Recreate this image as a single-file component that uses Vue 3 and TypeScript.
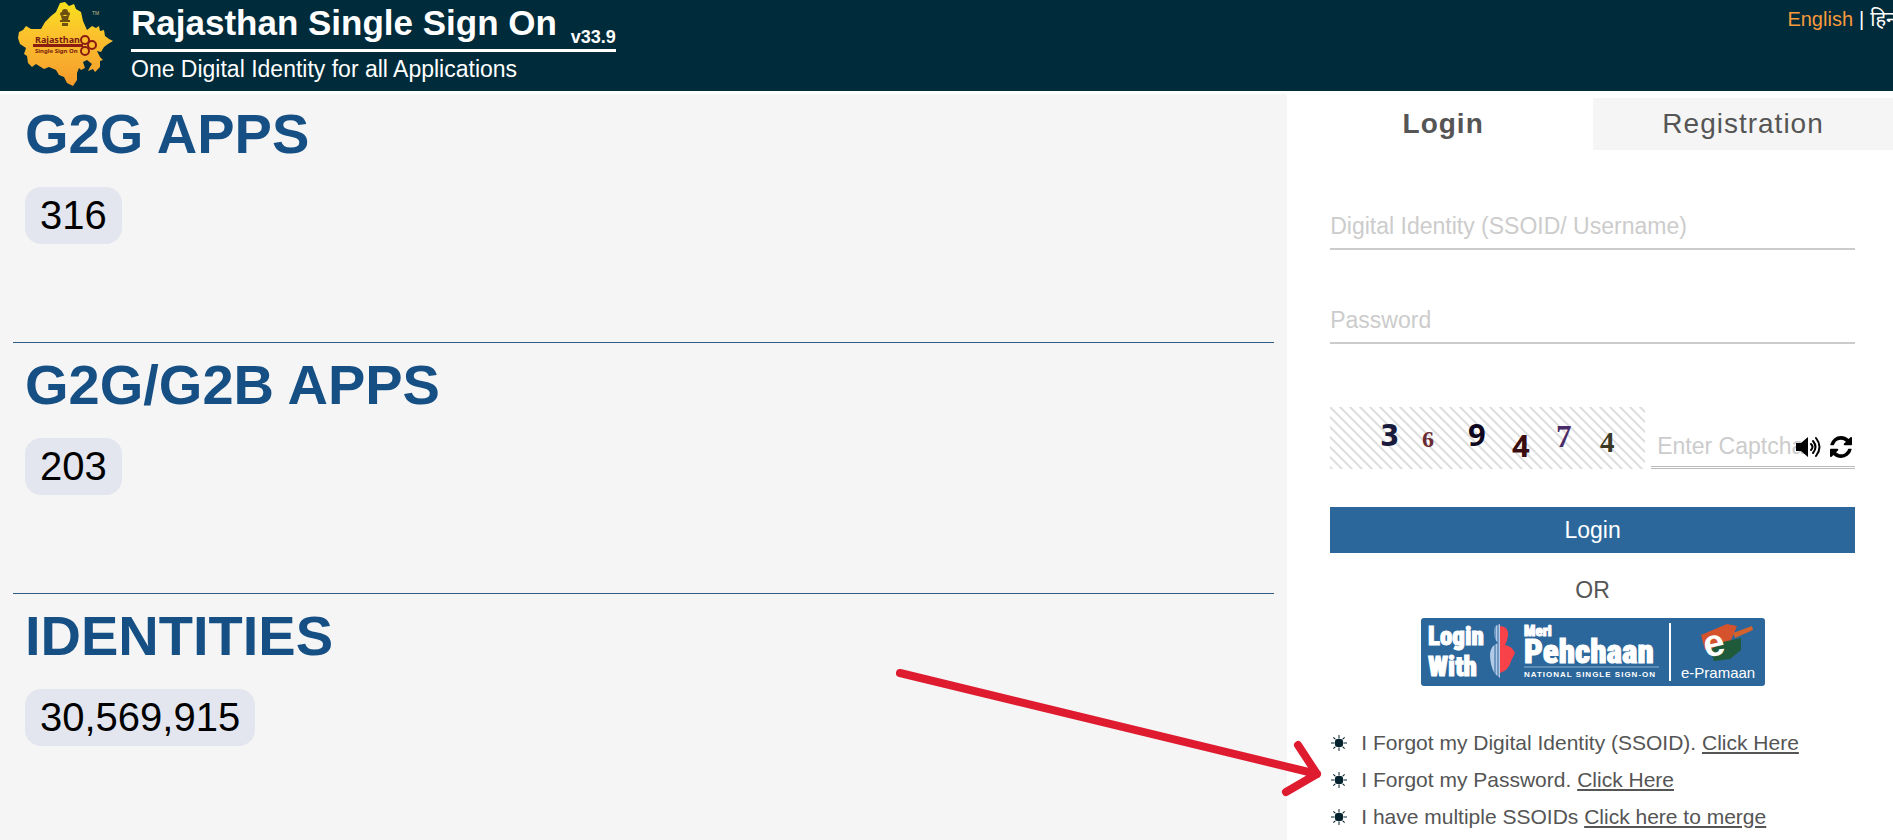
<script setup lang="ts">
import { ref } from 'vue'

interface Stat { title: string; value: string }
interface HelpLink { text: string; action: string }
interface Digit { char: string; x: number; y: number; size: number; color: string; family: string; weight: number }

const stats: Stat[] = [
  { title: 'G2G APPS', value: '316' },
  { title: 'G2G/G2B APPS', value: '203' },
  { title: 'IDENTITIES', value: '30,569,915' },
]

const helpLinks: HelpLink[] = [
  { text: 'I Forgot my Digital Identity (SSOID).', action: 'Click Here' },
  { text: 'I Forgot my Password.', action: 'Click Here' },
  { text: 'I have multiple SSOIDs', action: 'Click here to merge' },
]

const digits: Digit[] = [
  { char: '3', x: 50, y: 39, size: 31, color: '#191b3d', family: 'DejaVu Sans Condensed', weight: 700 },
  { char: '6', x: 92, y: 40, size: 24, color: '#6b2b35', family: 'Liberation Serif', weight: 700 },
  { char: '9', x: 138, y: 39, size: 31, color: '#0d0820', family: 'Noto Sans', weight: 700 },
  { char: '4', x: 182, y: 50, size: 31, color: '#3a0d10', family: 'Noto Sans', weight: 700 },
  { char: '7', x: 226, y: 40, size: 31, color: '#4a2c68', family: 'Liberation Serif', weight: 700 },
  { char: '4', x: 270, y: 45, size: 29, color: '#3a3822', family: 'Liberation Serif', weight: 700 },
]

const rays = [0, 45, 90, 135, 180, 225, 270, 315]

const ssoId = ref('')
const password = ref('')
const captcha = ref('')
</script>

<template>
  <div class="page">
    <header class="header">
      <svg class="logo" viewBox="0 0 100 88" role="img" aria-label="Rajasthan Single Sign On">
        <defs>
          <linearGradient id="mapFill" x1="0" y1="0" x2="0" y2="1">
            <stop offset="0" stop-color="#f7e11c" />
            <stop offset="0.35" stop-color="#fbc42c" />
            <stop offset="1" stop-color="#f59a2c" />
          </linearGradient>
        </defs>
        <path fill="url(#mapFill)" d="M44 3 L49 2 L53 6 L58 4 L60 9 L65 12 L67 21 L71 30 L76 26 L80 28 L83 26 L84 31 L88 30 L89 36 L93 39 L97 41 L92 44 L88 47 L85 52 L81 51 L84 57 L87 60 L84 61 L84 67 L79 72 L77 69 L72 71 L74 67 L76 64 L71 60 L67 62 L69 68 L65 70 L63 68 L61 73 L61 80 L57 86 L51 83 L48 77 L43 75 L40 70 L33 67 L28 69 L20 64 L16 67 L12 63 L11 56 L8 54 L10 48 L4 44 L2 38 L3 32 L7 30 L10 26 L15 29 L25 29 L29 22 L35 16 L40 12 Z" />
        <g fill="#6b5010">
          <circle cx="49" cy="12" r="3" />
          <circle cx="46" cy="14" r="2" />
          <circle cx="52" cy="14" r="2" />
          <path d="M45 16 H53 L52 20 H46 Z M44 20 H54 V22 H44 Z M46 23 H52 V26 H46 Z" />
        </g>
        <text x="76" y="15" class="logo-tm">TM</text>
        <text x="19" y="43" class="logo-name">Rajasthan</text>
        <rect x="17" y="44" width="50" height="3" fill="#8c1c12" />
        <text x="19" y="53" class="logo-sub">Single Sign On</text>
        <g fill="none" stroke="#8c1c12" stroke-width="2">
          <circle cx="69" cy="40" r="4" />
          <circle cx="76" cy="45" r="4" />
          <circle cx="69" cy="51" r="4" />
        </g>
      </svg>
      <div class="brand">
        <h1 class="brand-title">Rajasthan Single Sign On <small class="version">v33.9</small></h1>
        <p class="brand-tagline">One Digital Identity for all Applications</p>
      </div>
      <nav class="languages" aria-label="Language">
        <a class="language active" href="#en">English</a>
        <span>|</span>
        <a class="language" href="#hi" lang="hi">हिन्दी</a>
      </nav>
    </header>

    <main class="content">
      <section class="stats">
        <article v-for="stat in stats" :key="stat.title" class="stat">
          <h2 class="stat-title">{{ stat.title }}</h2>
          <span class="stat-value">{{ stat.value }}</span>
        </article>
      </section>

      <section class="access">
        <div class="tabs" role="tablist">
          <button class="tab selected" type="button" role="tab" aria-selected="true">Login</button>
          <button class="tab" type="button" role="tab" aria-selected="false">Registration</button>
        </div>

        <form class="form" @submit.prevent>
          <input v-model="ssoId" class="field" type="text" aria-label="Digital Identity" placeholder="Digital Identity (SSOID/ Username)" />
          <input v-model="password" class="field" type="password" aria-label="Password" placeholder="Password" />

          <div class="captcha">
            <svg class="captcha-image" viewBox="0 0 315 62" role="img" aria-label="Captcha">
              <defs>
                <pattern id="hatch" width="10" height="10" patternUnits="userSpaceOnUse">
                  <path d="M-2 -2 L12 12 M-2 8 L2 12 M8 -2 L12 2" stroke="#dedede" stroke-width="2" />
                </pattern>
              </defs>
              <rect width="315" height="62" fill="url(#hatch)" />
              <text
                v-for="(digit, index) in digits"
                :key="index"
                :x="digit.x"
                :y="digit.y"
                :fill="digit.color"
                :font-size="digit.size"
                :font-family="digit.family"
                :font-weight="digit.weight"
              >{{ digit.char }}</text>
            </svg>
            <div class="captcha-entry">
              <input v-model="captcha" class="captcha-field" type="text" aria-label="Enter Captcha" placeholder="Enter Captcha" />
              <div class="captcha-tools">
                <button class="tool" type="button" aria-label="Play captcha">
                  <svg class="tool-icon" viewBox="0 0 26 22">
                    <path d="M0 7 H5 L12 1 V21 L5 15 H0 Z" />
                    <g fill="none" stroke="#000" stroke-width="2" stroke-linecap="round">
                      <path d="M15 8 Q18 11 15 14" />
                      <path d="M17 5 Q22 11 17 17" />
                      <path d="M20 2 Q27 11 20 20" />
                    </g>
                  </svg>
                </button>
                <button class="tool" type="button" aria-label="Refresh captcha">
                  <svg class="tool-icon refresh" viewBox="0 0 1536 1536">
                    <path d="M1511 928q0 5-1 7-64 268-268 434.500T764 1536q-146 0-282.500-55T238 1324l-129 129q-19 19-45 19t-45-19-19-45V960q0-26 19-45t45-19h448q26 0 45 19t19 45-19 45l-137 137q71 66 161 102t187 36q134 0 250-65t186-179q11-17 53-117 8-23 30-23h192q13 0 22.500 9.500t9.500 22.500zm25-800v448q0 26-19 45t-45 19h-448q-26 0-45-19t-19-45 19-45l138-138Q969 256 768 256q-134 0-250 65T332 500q-11 17-53 117-8 23-30 23H50q-13 0-22.500-9.500T18 608v-7q65-268 270-434.500T768 0q146 0 284 55.500T1297 212l130-129q19-19 45-19t45 19 19 45z" />
                  </svg>
                </button>
              </div>
            </div>
          </div>

          <button class="submit" type="submit">Login</button>
        </form>

        <p class="divider">OR</p>

        <a class="pehchaan" href="#pehchaan" aria-label="Login with Meri Pehchaan, e-Pramaan">
          <svg class="pehchaan-art" viewBox="0 0 344 68">
            <rect width="344" height="68" rx="3" fill="#2b679b" />
            <g class="heavy">
              <text x="7" y="27" font-size="25">Login</text>
              <text x="7" y="58" font-size="27">With</text>
              <text x="103" y="18" font-size="15">Meri</text>
              <text x="103" y="45" font-size="33">Pehchaan</text>
            </g>
            <path d="M79 6 Q72 7 73 15 Q73 21 77 25 Q70 27 69 36 Q69 48 74 56 L79 60 Z" fill="#b4cbe8" />
            <path d="M74 7 V59 M77 6 V60" stroke="#2b679b" stroke-width="1" />
            <path d="M79 8 Q88 8 87 18 Q86 24 84 27 Q91 28 94 35 L90 43 Q88 52 79 55 Z" fill="#f8424a" />
            <path d="M103 49 H238" stroke="#8fb2d2" stroke-width="1" />
            <text x="103" y="59" class="caption">NATIONAL SINGLE SIGN-ON</text>
            <path d="M249 5 V63" stroke="#fff" stroke-width="2" />
            <path d="M280 17 L306 6 L316 8 L308 27 L284 32 Z" fill="#d4522c" />
            <path d="M312 15 L331 8 L332 12 L314 20 Z" fill="#d4622c" />
            <path d="M289 32 L302 24 L320 20 L320 32 L309 41 L293 43 Z" fill="#1f5a3a" />
            <text x="282" y="38" class="e-mark" transform="rotate(-12 292 25)">e</text>
            <text x="260" y="60" class="e-name">e-Pramaan</text>
          </svg>
        </a>

        <ul class="help">
          <li v-for="link in helpLinks" :key="link.text" class="help-item">
            <svg class="bullet" viewBox="0 0 16 16" aria-hidden="true">
              <circle cx="8" cy="8" r="4" />
              <path v-for="angle in rays" :key="angle" d="M8 0 V3" :transform="`rotate(${angle} 8 8)`" />
            </svg>
            <span>{{ link.text }} <a class="help-link" href="#help">{{ link.action }}</a></span>
          </li>
        </ul>

        <svg class="pointer" viewBox="0 0 440 64" aria-hidden="true">
          <path d="M12 10 L429 111 M410 82 L429 111 L398 129" />
        </svg>
      </section>
    </main>
  </div>
</template>

<style>
body {
  margin: 0;
  overflow-x: hidden;
}
</style>

<style scoped>
.page {
  display: flex;
  flex-direction: column;
  height: 100vh;
  overflow: hidden;
  background: #fff;
  color: #555;
  font-family: "Liberation Sans", Arial, sans-serif;
}

.header {
  position: relative;
  flex: none;
  display: flex;
  align-items: flex-start;
  box-sizing: border-box;
  height: 91px;
  padding-left: 16px;
  background: #002b3a;
  box-shadow: 0 3px 0 #fff;
  color: #fff;
}

.logo {
  flex: none;
  width: 100px;
  height: 88px;
  margin-right: 15px;
}

.logo-tm {
  fill: #c9b98a;
  font-size: 5px;
}

.logo-name {
  fill: #7a1a10;
  font: bold 9px "Noto Sans", sans-serif;
}

.logo-sub {
  fill: #7a1a10;
  font: bold 6px "Noto Sans", sans-serif;
}

.brand-title {
  margin: 0;
  padding-bottom: 3px;
  border-bottom: 3px solid #fff;
  font-size: 35px;
  line-height: 46px;
}

.version {
  margin-left: 4px;
  font-size: 18px;
  vertical-align: sub;
  line-height: 1;
}

.brand-tagline {
  margin: 0;
  padding-top: 3px;
  font-size: 23px;
  line-height: 28px;
}

.languages {
  display: flex;
  gap: 6px;
  margin-left: auto;
  margin-right: -15px;
  padding-top: 7px;
  font-size: 20px;
  line-height: 24px;
}

.language {
  color: #fff;
  font-family: "Liberation Sans", "Noto Sans", "Noto Sans Devanagari", sans-serif;
  text-decoration: none;
}

.language.active {
  color: #f79a3c;
}

.content {
  flex: 1;
  display: grid;
  grid-template-columns: 68fr 32fr;
  min-height: 0;
}

.stats {
  padding: 1px 13px 0;
  background: #f5f5f5;
}

.stat {
  box-sizing: border-box;
  height: 251px;
  padding: 10px 12px 0;
  border-bottom: 1px solid #2f5c87;
}

.stat:last-child {
  border-bottom: 0;
}

.stat-title {
  margin: 0 0 21px;
  color: #164f84;
  font-size: 56px;
  line-height: 64px;
}

.stat-value {
  display: inline-block;
  padding: 0 15px;
  border-radius: 16px;
  background: #e3e6ee;
  color: #000;
  font-size: 40px;
  line-height: 57px;
}

.access {
  position: relative;
}

.tabs {
  display: grid;
  grid-template-columns: 1fr 1fr;
  margin: 7px 0 0 6px;
}

.tab {
  height: 52px;
  padding: 0;
  border: 0;
  background: #f5f5f5;
  color: #555;
  font: 28px "Liberation Sans", Arial, sans-serif;
  letter-spacing: 1px;
}

.tab.selected {
  background: #fff;
  font-weight: bold;
}

.form {
  display: flex;
  flex-direction: column;
  margin: 54px 38px 0 43px;
}

.field,
.captcha-field {
  box-sizing: border-box;
  width: 100%;
  height: 46px;
  margin: 0 0 48px;
  padding: 0;
  border: 0;
  border-bottom: 2px solid #ccc;
  background: transparent;
  color: #555;
  font: 23px "Liberation Sans", Arial, sans-serif;
}

.field::placeholder,
.captcha-field::placeholder {
  color: #ccc;
  opacity: 1;
}

.captcha {
  display: flex;
  gap: 6px;
  margin-top: 15px;
}

.captcha-image {
  flex: none;
  width: 315px;
  height: 62px;
}

.captcha-entry {
  position: relative;
  flex: 1;
  display: flex;
  align-items: flex-end;
}

.captcha-field {
  height: 45px;
  margin: 0;
  padding: 2px 0 0 6px;
  border-bottom: 3px double #bbb;
}

.captcha-tools {
  position: absolute;
  right: 3px;
  bottom: 11px;
  display: flex;
  gap: 8px;
}

.tool {
  display: flex;
  padding: 0;
  border: 0;
  background: transparent;
}

.tool-icon {
  width: 26px;
  height: 22px;
}

.refresh {
  width: 22px;
}

.submit {
  height: 46px;
  margin-top: 38px;
  padding: 0;
  border: 0;
  background: #2b679b;
  color: #fff;
  font: 23px "Liberation Sans", Arial, sans-serif;
}

.divider {
  margin: 23px 0 14px 5px;
  font-size: 23px;
  line-height: 28px;
  text-align: center;
}

.pehchaan {
  display: flex;
  justify-content: center;
  margin-left: 5px;
}

.pehchaan-art {
  width: 344px;
  height: 68px;
}

.heavy {
  fill: #fff;
  stroke: #fff;
  stroke-width: 1;
  font-family: "Roboto Condensed", "Open Sans Condensed", Roboto, sans-serif;
  font-weight: 900;
}

.caption {
  fill: #fff;
  font: bold 8px "Liberation Sans", sans-serif;
  letter-spacing: 1px;
}

.e-mark {
  fill: #fff;
  font: bold 38px "Liberation Sans", sans-serif;
}

.e-name {
  fill: #fff;
  font: 15px "Liberation Sans", sans-serif;
}

.help {
  display: flex;
  flex-direction: column;
  gap: 9px;
  margin: 43px 0 0;
  padding: 0 0 0 44px;
  list-style: none;
  font-size: 21px;
  line-height: 28px;
}

.help-item {
  display: flex;
  align-items: center;
  gap: 14px;
  white-space: nowrap;
}

.bullet {
  flex: none;
  width: 16px;
  height: 16px;
  fill: #04222e;
  stroke: #04222e;
  stroke-width: 1;
}

.help-link {
  color: #555;
  text-decoration: underline;
}

.pointer {
  position: absolute;
  top: 572px;
  left: -399px;
  width: 440px;
  height: 64px;
  overflow: visible;
  fill: none;
  stroke: #df1b30;
  stroke-width: 8;
  stroke-linecap: round;
  stroke-linejoin: round;
  pointer-events: none;
}
</style>
